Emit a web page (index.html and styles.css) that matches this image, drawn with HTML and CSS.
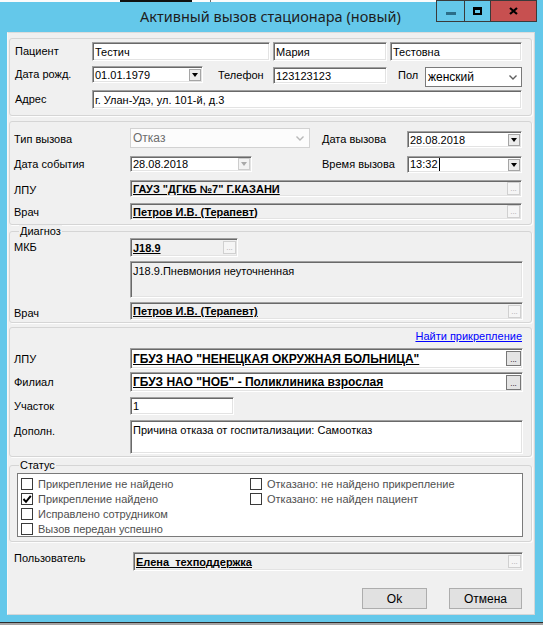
FILE: index.html
```html
<!DOCTYPE html>
<html lang="ru">
<head>
<meta charset="utf-8">
<title>Активный вызов стационара (новый)</title>
<link rel="stylesheet" href="styles.css">
</head>
<body>
<div class="win">
  <div class="titlebar">
    <div class="tleft">
      <div class="strip"><span class="blk"></span><span class="gr"></span></div>
      <div class="title">Активный вызов стационара (новый)</div>
    </div>
    <div class="wbtns">
      <div class="wb min"><span class="min-ico"></span></div>
      <div class="wb max"><span class="max-ico"></span></div>
      <div class="wb close"><svg width="9" height="8" viewBox="0 0 9 8"><path d="M1 1 L8 7 M8 1 L1 7" stroke="#000" stroke-width="2.2" fill="none"/></svg></div>
    </div>
  </div>

  <div class="client">
    <!-- Patient -->
    <div class="grp g1">
      <div class="row">
        <span class="lbl l1 lh19">Пациент</span>
        <span class="inp h19 w-surname">Тестич</span>
        <span class="inp h19 w-mid ml3">Мария</span>
        <span class="inp h19 w-patr ml3">Тестовна</span>
      </div>
      <div class="row r2">
        <span class="lbl l1 lh17">Дата рожд.</span>
        <span class="inp date h17 w-birth"><span>01.01.1979</span><span class="dd"></span></span>
        <span class="lbl l-phone lh17 mt1">Телефон</span>
        <span class="inp h17 w-mid mt1">123123123</span>
        <span class="lbl l-sex lh17 mt1">Пол</span>
        <span class="sel h20 w-sex mt1"><span>женский</span><svg width="8" height="5" viewBox="0 0 8 5"><path d="M0.5 0.5 L4 4 L7.5 0.5" stroke="#606060" stroke-width="1.4" fill="none"/></svg></span>
      </div>
      <div class="row r3">
        <span class="lbl l1 lh19">Адрес</span>
        <span class="inp h19 w-addr">г. Улан-Удэ, ул. 101-й, д.3</span>
      </div>
    </div>

    <!-- Call -->
    <div class="grp g2">
      <div class="row ra">
        <span class="lbl l2 lh17 mt3">Тип вызова</span>
        <span class="sel dis h20 w-type"><span>Отказ</span><svg width="8" height="5" viewBox="0 0 8 5"><path d="M0.5 0.5 L4 4 L7.5 0.5" stroke="#b8b8b8" stroke-width="1.4" fill="none"/></svg></span>
        <span class="lbl l-call lh17 mt3">Дата вызова</span>
        <span class="inp date h17 w-call mt3"><span>28.08.2018</span><span class="dd"></span></span>
      </div>
      <div class="row rb">
        <span class="lbl l2 lh17">Дата события</span>
        <span class="inp date h16 w-event"><span>28.08.2018</span><span class="dd dis"></span></span>
        <span class="lbl l-time lh17">Время вызова</span>
        <span class="inp date h17 w-call"><span>13:32<i class="caret"></i></span><span class="dd"></span></span>
      </div>
      <div class="row rc">
        <span class="lbl l2 lh17 mt2">ЛПУ</span>
        <span class="inp ref h17 w-full"><u>ГАУЗ "ДГКБ №7" Г.КАЗАНИ</u><span class="ell">...</span></span>
      </div>
      <div class="row rd">
        <span class="lbl l2 lh17 mt1">Врач</span>
        <span class="inp ref h17 w-full"><u>Петров И.В. (Терапевт)</u><span class="ell">...</span></span>
      </div>
    </div>

    <!-- Diagnosis -->
    <div class="grp g3">
      <div class="legend">Диагноз</div>
      <div class="row rmkb">
        <span class="lbl l2 lh19">МКБ</span>
        <span class="inp ref h19 w-mkb"><u>J18.9</u><span class="ell">...</span></span>
      </div>
      <div class="row rdesc">
        <span class="lbl l2"></span>
        <span class="inp memo grey h37 w-wide">J18.9.Пневмония неуточненная</span>
      </div>
      <div class="row rdoc">
        <span class="lbl l2 lh17 mt3">Врач</span>
        <span class="inp ref h18 w-wide"><u>Петров И.В. (Терапевт)</u><span class="ell">...</span></span>
      </div>
    </div>

    <!-- Attachment -->
    <div class="grp g4">
      <div class="linkrow"><span class="link">Найти прикрепление</span></div>
      <div class="row rlpu">
        <span class="lbl l2 lh21 mt1">ЛПУ</span>
        <span class="inp ref white big h21 w-wide"><u>ГБУЗ НАО "НЕНЕЦКАЯ ОКРУЖНАЯ БОЛЬНИЦА"</u><span class="ell on">...</span></span>
      </div>
      <div class="row rfil">
        <span class="lbl l2 lh20">Филиал</span>
        <span class="inp ref white big h20 w-wide"><u>ГБУЗ НАО "НОБ" - Поликлиника взрослая</u><span class="ell on">...</span></span>
      </div>
      <div class="row rsec">
        <span class="lbl l2 lh18">Участок</span>
        <span class="inp h18 w-sec">1</span>
      </div>
      <div class="row radd">
        <span class="lbl l2 lh13 mt5">Дополн.</span>
        <span class="inp memo h34 w-wide">Причина отказа от госпитализации: Самоотказ</span>
      </div>
    </div>

    <!-- Status -->
    <div class="grp g5">
      <div class="legend">Статус</div>
      <div class="stbox">
        <div class="cbrow"><span class="cb"></span>Прикрепление не найдено</div>
        <div class="cbrow"><span class="cb"></span>Отказано: не найдено прикрепление</div>
        <div class="cbrow"><span class="cb"><svg width="10" height="10" viewBox="0 0 10 10"><path d="M1.5 5 L4 7.8 L8.8 1.8" stroke="#000" stroke-width="2" fill="none"/></svg></span>Прикрепление найдено</div>
        <div class="cbrow"><span class="cb"></span>Отказано: не найден пациент</div>
        <div class="cbrow"><span class="cb"></span>Исправлено сотрудником</div>
        <div class="cbrow"></div>
        <div class="cbrow"><span class="cb"></span>Вызов передан успешно</div>
      </div>
    </div>

    <div class="row urow">
      <span class="lbl l-user lh13">Пользователь</span>
      <span class="inp ref h19 w-user"><u>Елена&nbsp;&nbsp;техподдержка</u><span class="ell">...</span></span>
    </div>

    <div class="btnrow">
      <span class="btn b-ok">Ok</span>
      <span class="btn b-cancel">Отмена</span>
    </div>
  </div>
  <div class="bottomedge"></div>
</div>
</body>
</html>
```

FILE: styles.css
```css
* { box-sizing: border-box; }
html, body { margin: 0; padding: 0; }
body {
  width: 543px; height: 625px; overflow: hidden;
  background: #64c8ea;
  font-family: "Liberation Sans", Arial, sans-serif;
  font-size: 11px; color: #000;
}
.win { width: 543px; height: 625px; display: flex; flex-direction: column; }

/* title bar */
.titlebar { height: 32px; display: flex; flex-shrink: 0; }
.tleft { flex: 1; display: flex; flex-direction: column; }
.strip { height: 2px; display: flex; background: #fbfbfb; }
.strip .blk { margin-left: 120px; width: 72px; background: #111; }
.strip .gr { margin-left: 18px; width: 1px; background: #6e6e6e; }
.title {
  padding-left: 140px; margin-top: 4px;
  font-family: "Noto Sans", "Open Sans", sans-serif;
  font-size: 14.5px; line-height: 20px; color: #1e1e1e;
}
.wbtns { display: flex; height: 22px; margin-right: 6px; }
.wb { height: 22px; border: 1px solid #3a3a3a; display: flex; align-items: center; justify-content: center; }
.wb.min { width: 28px; border-right: none; }
.wb.max { width: 26px; border-right: none; }
.wb.close { width: 47px; background: #c75050; }
.min-ico { width: 10px; height: 3px; background: #2b6e89; margin-top: 5px; }
.max-ico { width: 9px; height: 8px; border: 2px solid #000; border-top-width: 3px; }

/* client */
.client {
  margin-left: 7px; width: 528px; height: 583px; flex-shrink: 0;
  background: #f0f0f0;
  border: 1px solid #d3d6d8; border-left-color: #f8f8f8; border-top-color: #dcdcdc;
  padding: 5px 0 0 1px;
}
.bottomedge { margin-top: 7px; height: 3px; flex-shrink: 0; border-top: 1px solid #2d2d2d; background: #a3a3a3; }

/* groups */
.grp {
  width: 523px; border: 1px solid #d5d5d5; border-radius: 3px;
  box-shadow: 1px 1px 0 #fdfdfd;
}
.legend {
  width: fit-content; margin: -7px 0 0 5px; padding: 0 1px;
  background: #f0f0f0; line-height: 13px;
}
.g1 { padding: 3px 0 6px 5px; }
.g2 { margin-top: 5px; padding: 6px 0 4px 4px; }
.g3 { margin-top: 6px; padding: 0 0 2px 4px; }
.g4 { margin-top: 4px; padding: 2px 0 2px 4px; }
.g5 { margin-top: 8px; padding: 0 0 4px 7px; }
.g5 .legend { margin-left: 2px; margin-bottom: 1px; }

.row { display: flex; align-items: flex-start; }
.lbl { flex-shrink: 0; white-space: nowrap; }
.lh13 { line-height: 13px; } .lh17 { line-height: 17px; } .lh18 { line-height: 18px; }
.lh19 { line-height: 19px; } .lh20 { line-height: 20px; } .lh21 { line-height: 21px; }
.mt1 { margin-top: 1px; } .mt2 { margin-top: 2px; } .mt3 { margin-top: 3px; } .mt5 { margin-top: 5px; }
.ml3 { margin-left: 3px; }
.h16 { height: 16px; } .h17 { height: 17px; } .h18 { height: 18px; } .h19 { height: 19px; }
.h20 { height: 20px; } .h21 { height: 21px; } .h34 { height: 34px; } .h37 { height: 37px; }

.l1 { width: 77px; }
.l2 { width: 116px; }
.l-phone { margin-left: 15px; width: 55px; }
.l-sex { margin-left: 11px; width: 27px; }
.l-call { margin-left: 12px; width: 85px; }
.l-time { margin-left: 70px; width: 85px; }
.l-user { width: 119px; }

/* rows: fixed heights so label offsets do not grow the row */
.ra { height: 20px; }
.r2 { margin-top: 5px; height: 21px; }
.r3 { margin-top: 3px; }
.rb { margin-top: 8px; height: 17px; }
.rc { margin-top: 7px; height: 17px; }
.rd { margin-top: 6px; height: 17px; }
.rmkb { margin-top: 0; height: 19px; }
.rdesc { margin-top: 4px; }
.rdoc { margin-top: 4px; height: 18px; }
.rlpu { margin-top: 5px; height: 21px; }
.rfil { margin-top: 3px; height: 20px; }
.rsec { margin-top: 5px; height: 18px; }
.radd { margin-top: 5px; height: 34px; }

/* widths */
.w-surname { width: 178px; } .w-mid { width: 114px; } .w-patr { width: 132px; }
.w-birth { width: 111px; } .w-sex { width: 97px; } .w-addr { width: 430px; }
.w-type { width: 180px; } .w-call { width: 115px; } .w-event { width: 122px; }
.w-full { width: 392px; } .w-wide { width: 393px; } .w-mkb { width: 108px; }
.w-sec { width: 104px; } .w-user { width: 390px; }

/* classic sunken input */
.inp {
  display: flex; align-items: center; flex-shrink: 0;
  border: 1px solid; border-color: #a0a0a0 #ffffff #ffffff #a0a0a0;
  box-shadow: inset 1px 1px 0 #696969, inset -1px -1px 0 #e3e3e3;
  background: #fff; padding: 0 2px 0 2px;
  white-space: nowrap; overflow: hidden;
}
.inp.date { justify-content: space-between; padding-right: 1px; }
.dd {
  width: 12px; height: 12px; border: 1px solid #a5a5a5; background: #ececec;
  display: flex; align-items: center; justify-content: center;
}
.dd::after {
  content: ""; width: 0; height: 0;
  border-left: 3px solid transparent; border-right: 3px solid transparent;
  border-top: 4px solid #000;
}
.dd.dis { border-color: #cdcdcd; background: #f3f3f3; }
.dd.dis::after { border-top-color: #a9a9a9; }
.caret { display: inline-block; width: 1px; height: 13px; background: #000; vertical-align: -3px; margin-left: 1px; }

.inp.ref { background: #f0f0f0; justify-content: space-between; padding-right: 1px; font-weight: bold; }
.inp.ref.white { background: #fff; }
.inp.ref.big { font-size: 12px; }
.inp.memo { align-items: flex-start; padding-top: 3px; }
.inp.grey { background: #f0f0f0; }

.ell {
  flex-shrink: 0; width: 13px; height: 13px;
  border: 1px solid #d0d0d0; background: #f5f5f5; color: #a9a9a9;
  font-size: 8px; font-weight: normal; line-height: 8px;
  display: flex; align-items: flex-end; justify-content: center; padding-bottom: 1px;
}
.ell.on { width: 15px; height: 15px; border-color: #777; background: #e4e4e4; color: #000; }

/* modern combobox */
.sel {
  display: flex; align-items: center; justify-content: space-between; flex-shrink: 0;
  border: 1px solid #7a7a7a; background: #fff; padding: 0 4px 0 2px; font-size: 12px;
}
.sel.dis { border-color: #d2d2d2; background: #fcfcfc; color: #6d6d6d; padding-right: 5px; }

/* link */
.linkrow { text-align: right; padding-right: 9px; line-height: 13px; }
.link { color: #0000ff; text-decoration: underline; }

/* status */
.stbox {
  width: 506px; height: 64px; background: #fff; border: 1px solid #7a7a7a;
  padding: 2px 0 0 3px;
  display: grid; grid-template-columns: 229px 1fr; grid-auto-rows: 15px;
}
.cbrow { display: flex; align-items: center; color: #505050; }
.cb {
  width: 12px; height: 12px; border: 1px solid #3a3a3a; background: #fff;
  margin-right: 5px; display: flex; align-items: center; justify-content: center;
}

/* bottom */
.urow { margin-top: 10px; padding-left: 5px; height: 19px; }
.btnrow { display: flex; justify-content: flex-end; gap: 22px; margin-top: 17px; padding-right: 12px; }
.btn {
  height: 21px; border: 1px solid #adadad; background: #e1e1e1;
  display: flex; align-items: center; justify-content: center; font-size: 12px;
}
.b-ok { width: 65px; }
.b-cancel { width: 73px; }
```
